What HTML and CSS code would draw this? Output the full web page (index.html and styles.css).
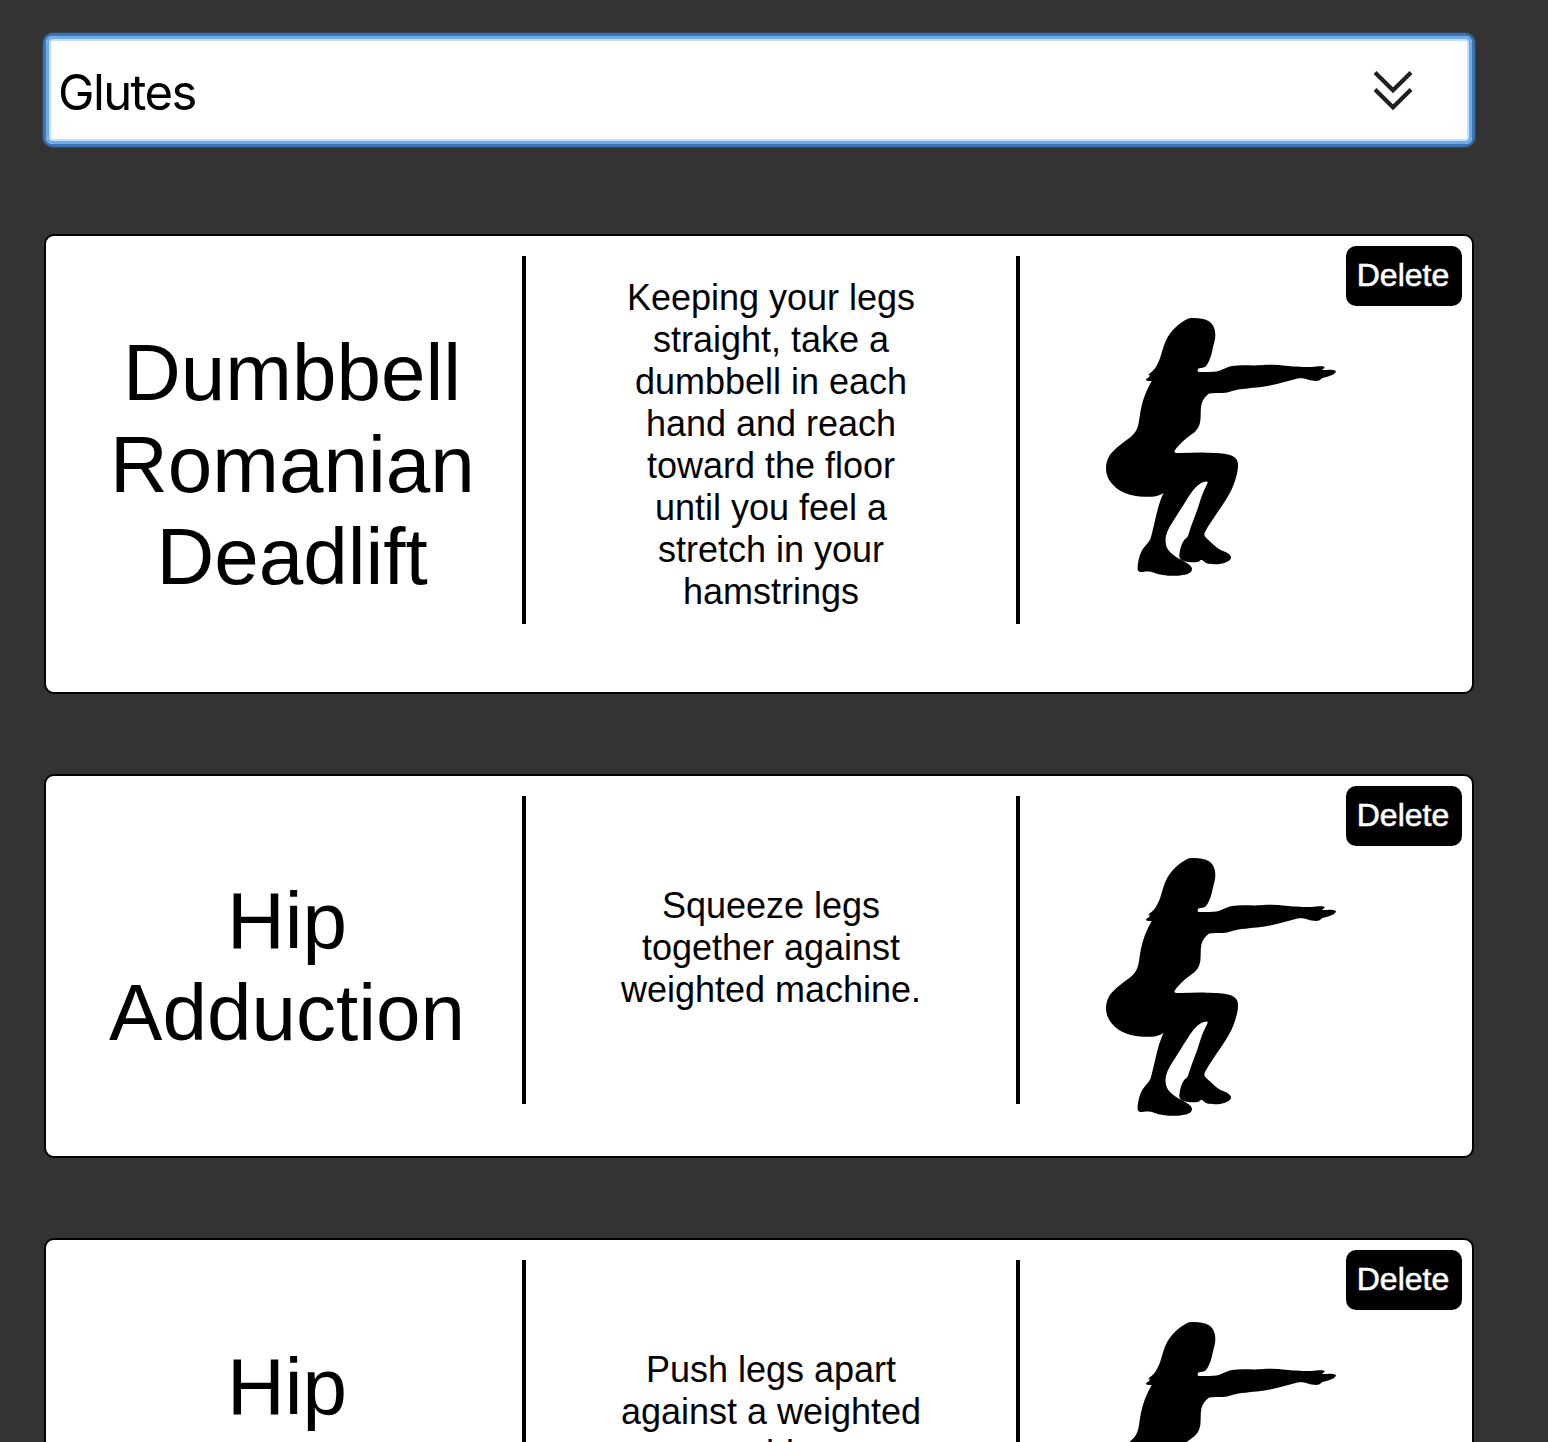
FILE: index.html
```html
<!DOCTYPE html>
<html lang="en">
<head>
<meta charset="utf-8">
<title>Exercises</title>
<link rel="stylesheet" href="styles.css">
</head>
<body>
<svg class="sprite" width="0" height="0" aria-hidden="true">
  <symbol id="squat" viewBox="0 0 780 870">
    <path d="M297 55C317 52 340 55 354 62C369 70 376 86 376 105C376 117 373 127 370 138C367 149 367 156 362 170C357 185 350 198 343 202C336 205 326 203 323 209C322 214 324 216 331 216C352 217 374 216 388 212C403 207 413 200 426 198C452 194 475 197 510 196C540 194 560 194 585 197C615 200 645 201 665 201C680 199 694 197 703 200C706 204 699 207 696 210C710 210 728 207 738 213C738 221 724 227 709 231C699 233 694 235 690 240C681 245 665 242 656 239C646 235 633 233 620 236C589 244 561 252 527 259C490 265 462 265 436 271C421 274 415 279 397 279C383 280 365 278 355 282C345 290 337 301 334 314C331 328 333 345 331 362C328 382 319 393 306 402C288 415 267 433 254 452C252 456 254 459 260 459C290 460 320 456 350 458C377 459 402 458 422 466C439 473 445 482 444 500C443 518 438 533 432 551C417 596 368 652 345 696C341 705 343 710 351 716C365 727 376 741 393 751C406 756 418 760 423 770C425 782 410 788 394 791C379 794 361 793 350 790C342 786 338 779 334 779C330 780 328 785 321 786C308 788 290 786 280 782C270 778 267 774 268 764C270 745 275 730 283 719C292 713 294 709 296 701C306 668 319 641 329 607C335 584 345 565 353 548C353 543 347 544 341 546C325 551 311 568 299 585C285 607 264 641 246 669C233 690 225 707 227 727C228 747 240 757 254 768C267 777 283 784 295 792C304 798 308 805 305 812C301 821 284 825 263 827C240 829 209 825 194 819C181 813 171 814 161 815C153 816 146 817 143 809C142 789 149 763 158 748C166 736 177 728 182 715C195 669 202 615 221 578C214 584 201 588 187 590C151 592 111 586 86 569C61 552 48 530 48 504C49 481 57 465 73 450C94 430 120 416 133 400C149 380 147 351 153 326C158 300 169 270 185 243C179 242 169 244 168 239C169 235 174 235 177 231L180 226L175 226C178 219 190 214 197 202C214 176 216 145 229 119C238 99 268 66 297 55Z"/>
  </symbol>
</svg>
<main class="page">
  <div class="select" tabindex="0">
    <span class="select-value">Glutes</span>
    <svg class="select-icon" viewBox="0 0 40 42" width="40" height="42"><path d="M2 3.5 20 21.2 38 3.5M2 20.5 20 38.2 38 20.5"/></svg>
  </div>
  <article class="card card-tall">
    <h2 class="title">Dumbbell Romanian Deadlift</h2>
    <div class="details"><p>Keeping your legs straight, take a dumbbell in each hand and reach toward the floor until you feel a stretch in your hamstrings</p></div>
    <svg class="figure"><use href="#squat"/></svg>
    <button class="delete">Delete</button>
  </article>
  <article class="card">
    <h2 class="title">Hip Adduction</h2>
    <div class="details"><p>Squeeze legs together against weighted machine.</p></div>
    <svg class="figure"><use href="#squat"/></svg>
    <button class="delete">Delete</button>
  </article>
  <article class="card card-last">
    <h2 class="title">Hip Abduction</h2>
    <div class="details"><p>Push legs apart against a weighted machine.</p></div>
    <svg class="figure"><use href="#squat"/></svg>
    <button class="delete">Delete</button>
  </article>
</main>
</body>
</html>
```
FILE: styles.css
```css
* { box-sizing: border-box; }
html { background: #333; }
body {
  margin: 0;
  height: 1442px;
  overflow: hidden;
  background: #333;
  color: #000;
  font-family: "Liberation Sans", Arial, sans-serif;
}
.sprite { position: absolute; }
.page {
  display: flex;
  flex-direction: column;
  width: 1430px;
  margin-left: 44px;
  padding-top: 36px;
}
.select {
  display: flex;
  align-items: center;
  justify-content: space-between;
  height: 108px;
  margin: 0 2px 90px;
  padding: 0 59px 0 12px;
  border-radius: 7px;
  background: #fff;
  outline: none;
  box-shadow: 0 0 0 2px #3a76b8, 0 0 0 3px #396fab, 0 0 0 4px #34465a,
    inset 0 0 0 3px #6fabe9, inset 0 0 0 5px #c5dffc;
}
.select-value {
  font-family: Inter, sans-serif;
  font-size: 49px;
  line-height: 58px;
  letter-spacing: -1.6px;
  padding-top: 5px;
}
.select-icon { fill: none; stroke: #231f20; stroke-width: 4.2; }
.card {
  position: relative;
  display: grid;
  grid-template-columns: 476px 498px 1fr;
  flex: none;
  height: 384px;
  margin-bottom: 80px;
  padding: 20px 0 52px;
  border: 2px solid #000;
  border-radius: 10px;
  background: #fff;
}
.card-tall { height: 460px; padding-bottom: 68px; }
.title {
  align-self: start;
  margin: 0;
  padding: 79px 54px 0 60px;
  font-size: 80px;
  font-weight: 400;
  line-height: 92px;
  text-align: center;
}
.card-tall .title { padding: 71px 48px 0 64px; }
.card-last .title { padding-top: 81px; }
.details {
  display: flex;
  justify-content: center;
  align-items: center;
  padding-bottom: 4px;
  border: solid #000;
  border-width: 0 4px;
}
.card-tall .details { padding: 10px 0 0; }
.details p {
  width: 310px;
  margin: 0;
  font-size: 36px;
  line-height: 42px;
  text-align: center;
}
.figure {
  width: 260px;
  height: 290px;
  margin: 44px 0 -60px 70px;
}
.delete {
  position: absolute;
  top: 10px;
  right: 10px;
  width: 116px;
  height: 60px;
  padding: 0 2px 2px 0;
  border: 0;
  border-radius: 10px;
  background: #000;
  color: #fff;
  font: 32px "Liberation Sans", Arial, sans-serif;
  -webkit-text-stroke: 0.6px #fff;
}
```
